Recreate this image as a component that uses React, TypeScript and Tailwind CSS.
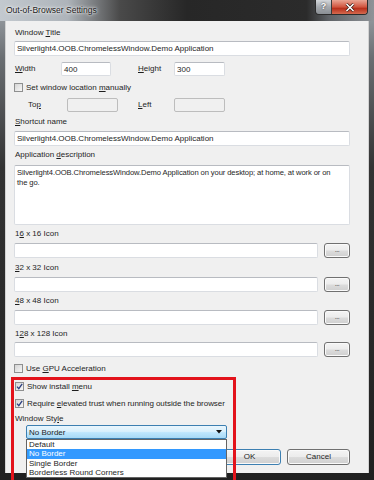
import React from "react";

const U = ({ children }: { children: React.ReactNode }) => (
  <span className="underline decoration-1 underline-offset-[1px]">{children}</span>
);

const Label = ({ children, className = "" }: { children: React.ReactNode; className?: string }) => (
  <div className={`h-[11px] leading-[11px] pl-px whitespace-nowrap ${className}`}>{children}</div>
);

const Input = ({
  className = "",
  value = "",
  disabled = false,
}: {
  className?: string;
  value?: string;
  disabled?: boolean;
}) => (
  <div
    className={`${
      disabled ? "bg-[#f0f0f0] border-[#bdbdbd]" : "bg-white border-[#dadde2] border-t-[#b8bbc1]"
    } border rounded-[2px] px-[2px] flex items-center overflow-hidden whitespace-nowrap leading-[11px] ${className}`}
  >
    {value}
  </div>
);

const Check = ({ checked = false }: { checked?: boolean }) => (
  <div className="w-[9px] h-[9px] border border-[#8e8f8f] bg-[linear-gradient(135deg,#d4d4d4,#f7f7f7)] flex items-center justify-center shrink-0">
    {checked && (
      <svg width="7" height="7" viewBox="0 0 7 7">
        <path d="M1 3.6 L2.8 5.6 L6.2 0.8" stroke="#2b3f80" strokeWidth="1.3" fill="none" />
      </svg>
    )}
  </div>
);

const Btn = ({ children, className = "" }: { children: React.ReactNode; className?: string }) => (
  <div
    className={`border rounded-[3px] flex items-center justify-center bg-[linear-gradient(180deg,#f4f4f4_0%,#ececec_48%,#dcdcdc_52%,#cfcfcf_100%)] shadow-[inset_0_0_0_1px_#fafafa] ${className}`}
  >
    {children}
  </div>
);

const IconRow = ({ className = "" }: { className?: string }) => (
  <div className={`h-[15px] flex gap-[6px] ${className}`}>
    <Input className="flex-1 h-[15px]" />
    <Btn className="w-[26px] h-[15px] border-[#707070] text-[7px] text-[#444] leading-none">
      <span className="-mt-[2px] tracking-[-0.5px]">...</span>
    </Btn>
  </div>
);

export default function App() {
  return (
    <div className="w-[374px] h-[480px] relative overflow-hidden flex flex-col bg-[linear-gradient(180deg,#a3a9af_0%,#6a6e72_12%,#333333_35%,#202020_100%)] font-['Liberation_Sans',Arial,sans-serif] text-[8px] text-[#1e1e1e]">
      {/* Title bar */}
      <div className="h-[21px] shrink-0 relative bg-[linear-gradient(90deg,#c3c9cf_0%,#aeb4ba_18%,#4a4a4a_32%,#272727_50%,#2b2b2b_82%,#5f6367_88%,#8f9398_100%)]">
        <div className="absolute left-[6px] top-[4px] text-[8.5px] leading-[12px] text-[#1a1a1a] [text-shadow:0_0_4px_#ffffff,0_0_2px_#ffffff]">
          Out-of-Browser Settings
        </div>
        <div className="absolute right-[6px] top-0 flex h-[15px] border border-t-0 border-[#2c2c2c] rounded-b-[4px] overflow-hidden">
          <div className="w-[16px] h-full flex items-center justify-center bg-[linear-gradient(180deg,#d4d8dc_0%,#a4a9ae_50%,#8a8f94_100%)] border-r border-[#3a3a3a] text-white text-[9px] font-bold [text-shadow:0_0_2px_#222]">
            ?
          </div>
          <div className="w-[35px] h-full flex items-center justify-center bg-[linear-gradient(180deg,#e9a594_0%,#d1553f_50%,#b8301c_60%,#d56a4f_100%)]">
            <svg width="10" height="9" viewBox="0 0 10 9">
              <path d="M1.5 1 L8.5 8 M8.5 1 L1.5 8" stroke="#3a1a14" strokeWidth="3" />
              <path d="M1.5 1 L8.5 8 M8.5 1 L1.5 8" stroke="#ffffff" strokeWidth="1.6" />
            </svg>
          </div>
        </div>
      </div>

      {/* Frame + content */}
      <div className="px-[5px]">
        <div className="h-[452px] bg-[#f0f0f0] border-x border-[#d2d2d2] pt-[6px] pl-[8px] pr-[18px] flex flex-col">
          <Label>
            Window <U>T</U>itle
          </Label>
          <Input className="mt-[3px] h-[15px]" value="Silverlight4.OOB.ChromelessWindow.Demo Application" />

          <div className="mt-[6px] h-[14px] flex items-center">
            <span className="w-[47px] pl-px">
              <U>W</U>idth
            </span>
            <Input className="w-[50px] h-[14px]" value="400" />
            <span className="ml-[27px] w-[36px]">
              <U>H</U>eight
            </span>
            <Input className="w-[51px] h-[14px]" value="300" />
          </div>

          <div className="mt-[6px] h-[11px] flex items-center gap-[3px]">
            <Check />
            <span className="whitespace-nowrap">
              Set window location <U>m</U>anually
            </span>
          </div>

          <div className="mt-[5px] h-[14px] flex items-center">
            <span className="ml-[14px] w-[39px]">
              To<U>p</U>
            </span>
            <Input disabled className="w-[51px] h-[14px]" />
            <span className="ml-[20px] w-[36px]">
              <U>L</U>eft
            </span>
            <Input disabled className="w-[51px] h-[14px]" />
          </div>

          <Label className="mt-[4px]">
            <U>S</U>hortcut name
          </Label>
          <Input className="mt-[4px] h-[15px]" value="Silverlight4.OOB.ChromelessWindow.Demo Application" />

          <Label className="mt-[3px]">
            Application <U>d</U>escription
          </Label>
          <div className="mt-[5px] h-[60px] bg-white border border-[#dadde2] border-t-[#b8bbc1] rounded-[2px] px-[2px] pt-[2px] leading-[9.5px] whitespace-nowrap overflow-hidden text-[7.6px] tracking-[-0.1px]">
            Silverlight4.OOB.ChromelessWindow.Demo Application on your desktop; at home, at work or on
            <br />
            the go.
          </div>

          <Label className="mt-[3px]">
            1<U>6</U> x 16 Icon
          </Label>
          <IconRow className="mt-[4px]" />
          <Label className="mt-[4px]">
            <U>3</U>2 x 32 Icon
          </Label>
          <IconRow className="mt-[4px]" />
          <Label className="mt-[3px]">
            <U>4</U>8 x 48 Icon
          </Label>
          <IconRow className="mt-[4px]" />
          <Label className="mt-[3px]">
            1<U>2</U>8 x 128 Icon
          </Label>
          <IconRow className="mt-[3px]" />

          <div className="mt-[6px] h-[11px] flex items-center gap-[3px]">
            <Check />
            <span className="whitespace-nowrap">
              Use <U>G</U>PU Acceleration
            </span>
          </div>
          <div className="mt-[7px] h-[11px] flex items-center gap-[3px] pl-px">
            <Check checked />
            <span className="whitespace-nowrap">
              Show install <U>m</U>enu
            </span>
          </div>
          <div className="mt-[6px] h-[11px] flex items-center gap-[3px] pl-px">
            <Check checked />
            <span className="whitespace-nowrap tracking-[-0.05px]">
              Require <U>e</U>levated trust when running outside the browser
            </span>
          </div>

          <Label className="mt-[4px] pl-[16px]">
            Window Sty<U>l</U>e
          </Label>
          <div className="mt-[1px] ml-[12px] w-[201px] relative z-10">
            <div className="h-[14px] border border-[#3c7fb1] rounded-[2px] bg-[linear-gradient(180deg,#eaf6fd_0%,#d9f0fc_45%,#bee6fd_55%,#a7d9f5_100%)] flex items-center px-[2px] leading-[11px]">
              <span className="flex-1">No Border</span>
              <svg width="6" height="4" viewBox="0 0 6 4" className="mr-[2px]">
                <path d="M0 0 L6 0 L3 3.5 Z" fill="#111" />
              </svg>
            </div>
            <div className="absolute left-0 top-full w-[201px] bg-white border border-[#646464] flex flex-col leading-[9.3px]">
              <div className="px-[2px] h-[9.3px]">Default</div>
              <div className="px-[2px] h-[9.3px] bg-[#3399ff] text-white">No Border</div>
              <div className="px-[2px] h-[9.3px]">Single Border</div>
              <div className="px-[2px] h-[9.3px]">Borderless Round Corners</div>
            </div>
          </div>

          <div className="mt-[10px] h-[16px] flex justify-end gap-[6px]">
            <Btn className="w-[63px] h-[16px] border-[#3c7fb1]">OK</Btn>
            <Btn className="w-[63px] h-[16px] border-[#707070]">Cancel</Btn>
          </div>
        </div>
      </div>

      {/* Red annotation box */}
      <div className="absolute left-[11px] top-[377px] w-[225px] h-[110px] border-[3px] border-[#e3131b] z-20 pointer-events-none" />
    </div>
  );
}
